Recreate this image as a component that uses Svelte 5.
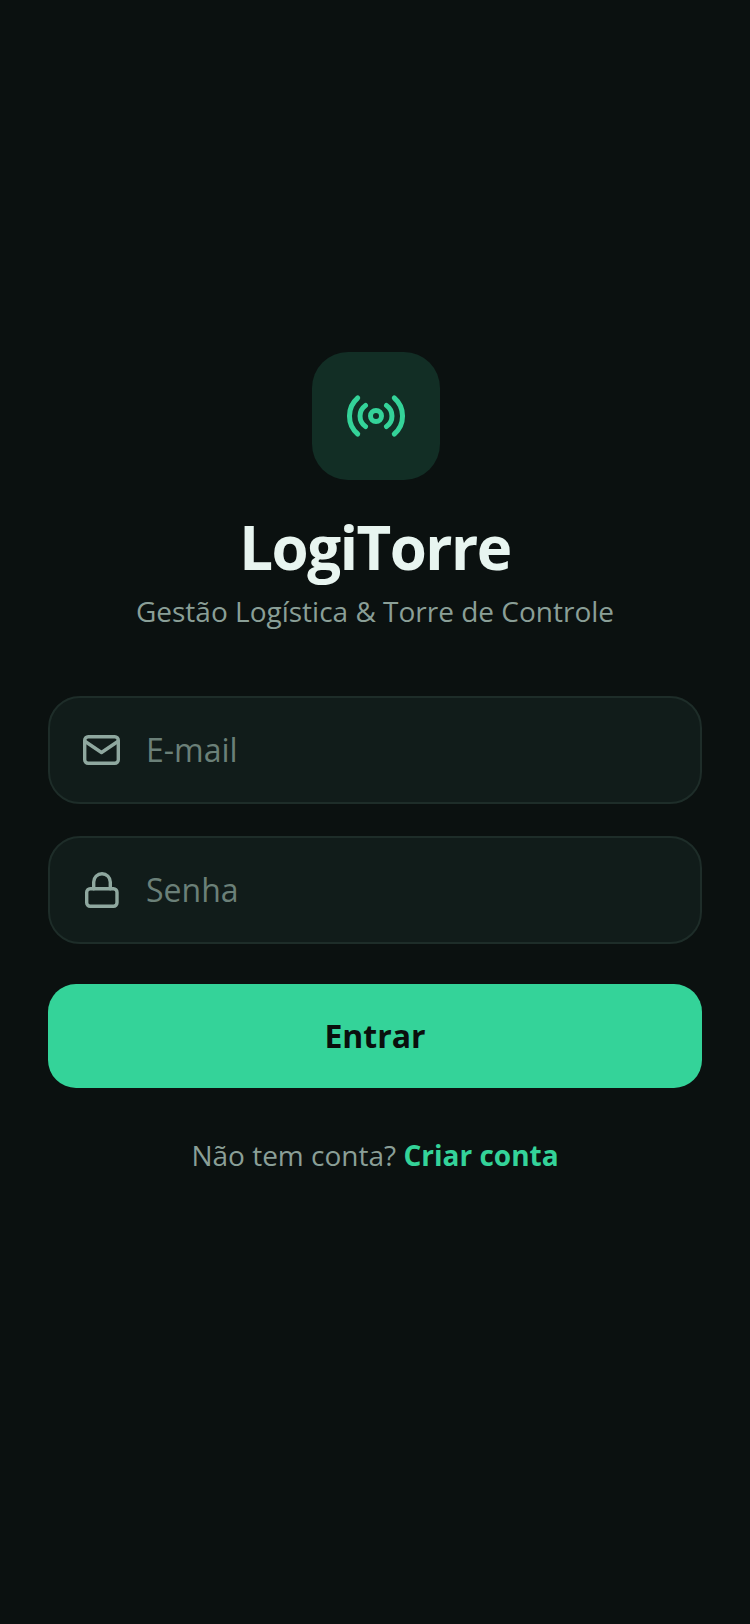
<script>
    let email = $state('');
    let senha = $state('');
</script>

<main class="screen">
    <div class="logo">
        <svg width="64" height="64" viewBox="0 0 64 64" fill="none" stroke="#34d399" stroke-width="5" stroke-linecap="round">
            <circle cx="32" cy="32" r="5.5"/>
            <path d="M13.7 14A23.8 23.8 0 0 0 13.7 50"/>
            <path d="M21.5 21.5A12.8 12.8 0 0 0 21.5 42.5"/>
            <path d="M50.3 14A23.8 23.8 0 0 1 50.3 50"/>
            <path d="M42.5 21.5A12.8 12.8 0 0 1 42.5 42.5"/>
        </svg>
    </div>
    <h1>LogiTorre</h1>
    <p class="sub">Gestão Logística &amp; Torre de Controle</p>

    <form class="form" onsubmit={(e) => e.preventDefault()}>
        <label class="field">
            <svg width="40" height="40" viewBox="0 0 40 40" fill="none" stroke="#8fa89f" stroke-width="3.4" stroke-linecap="round" stroke-linejoin="round">
                <rect x="2.7" y="6.7" width="33.6" height="26.6" rx="3.5"/>
                <path d="M3.2 11.5L19.5 22.5L35.8 11.5"/>
            </svg>
            <input type="email" placeholder="E-mail" bind:value={email}/>
        </label>
        <label class="field">
            <svg width="40" height="40" viewBox="0 0 40 40" fill="none" stroke="#8fa89f" stroke-width="3.4" stroke-linecap="round" stroke-linejoin="round">
                <rect x="4.7" y="18.7" width="30.3" height="17.6" rx="3.5"/>
                <path d="M11.7 18.7V12A8.3 8.3 0 0 1 28.3 12V18.7"/>
            </svg>
            <input type="password" placeholder="Senha" bind:value={senha}/>
        </label>
        <button type="submit">Entrar</button>
    </form>

    <p class="signup">Não tem conta? <a href="#criar">Criar conta</a></p>
</main>

<style>
    :global(body) {
        background: #0b1110;
    }

    .screen {
        box-sizing: border-box;
        min-height: 1624px;
        padding: 352px 48px 0;
        display: flex;
        flex-direction: column;
        align-items: center;
        background: #0b1110;
        font-family: "Open Sans", sans-serif;
    }

    .logo {
        width: 128px;
        height: 128px;
        margin-left: 2px;
        border-radius: 36px;
        background: #122e25;
        display: flex;
        align-items: center;
        justify-content: center;
    }

    h1 {
        margin: 26px 0 0;
        font-size: 60px;
        line-height: 82px;
        font-weight: 700;
        letter-spacing: -1.5px;
        color: #e8f5f0;
    }

    .sub {
        margin: 4px 0 0;
        font-size: 28px;
        line-height: 38px;
        color: #8a9f97;
    }

    .form {
        width: 100%;
        margin-top: 66px;
        display: flex;
        flex-direction: column;
    }

    .field {
        box-sizing: border-box;
        height: 108px;
        margin-bottom: 32px;
        padding: 0 32px;
        display: flex;
        align-items: center;
        gap: 24px;
        background: #111c1a;
        border: 2px solid #1e2d29;
        border-radius: 32px;
    }

    input {
        flex: 1;
        min-width: 0;
        padding: 0 0 2px;
        border: 0;
        outline: 0;
        background: transparent;
        font: inherit;
        font-size: 32px;
        color: #e8f5f0;
    }

    input::placeholder {
        color: #6b8078;
        opacity: 1;
    }

    button {
        height: 104px;
        margin-top: 8px;
        padding: 0 0 2px;
        border: 0;
        border-radius: 28px;
        background: #34d399;
        color: #0a0f0d;
        font: inherit;
        font-size: 32px;
        font-weight: 700;
    }

    .signup {
        margin: 48px 0 0;
        font-size: 28px;
        line-height: 38px;
        color: #8a9f97;
    }

    .signup a {
        color: #34d399;
        font-weight: 700;
        text-decoration: none;
    }
</style>
